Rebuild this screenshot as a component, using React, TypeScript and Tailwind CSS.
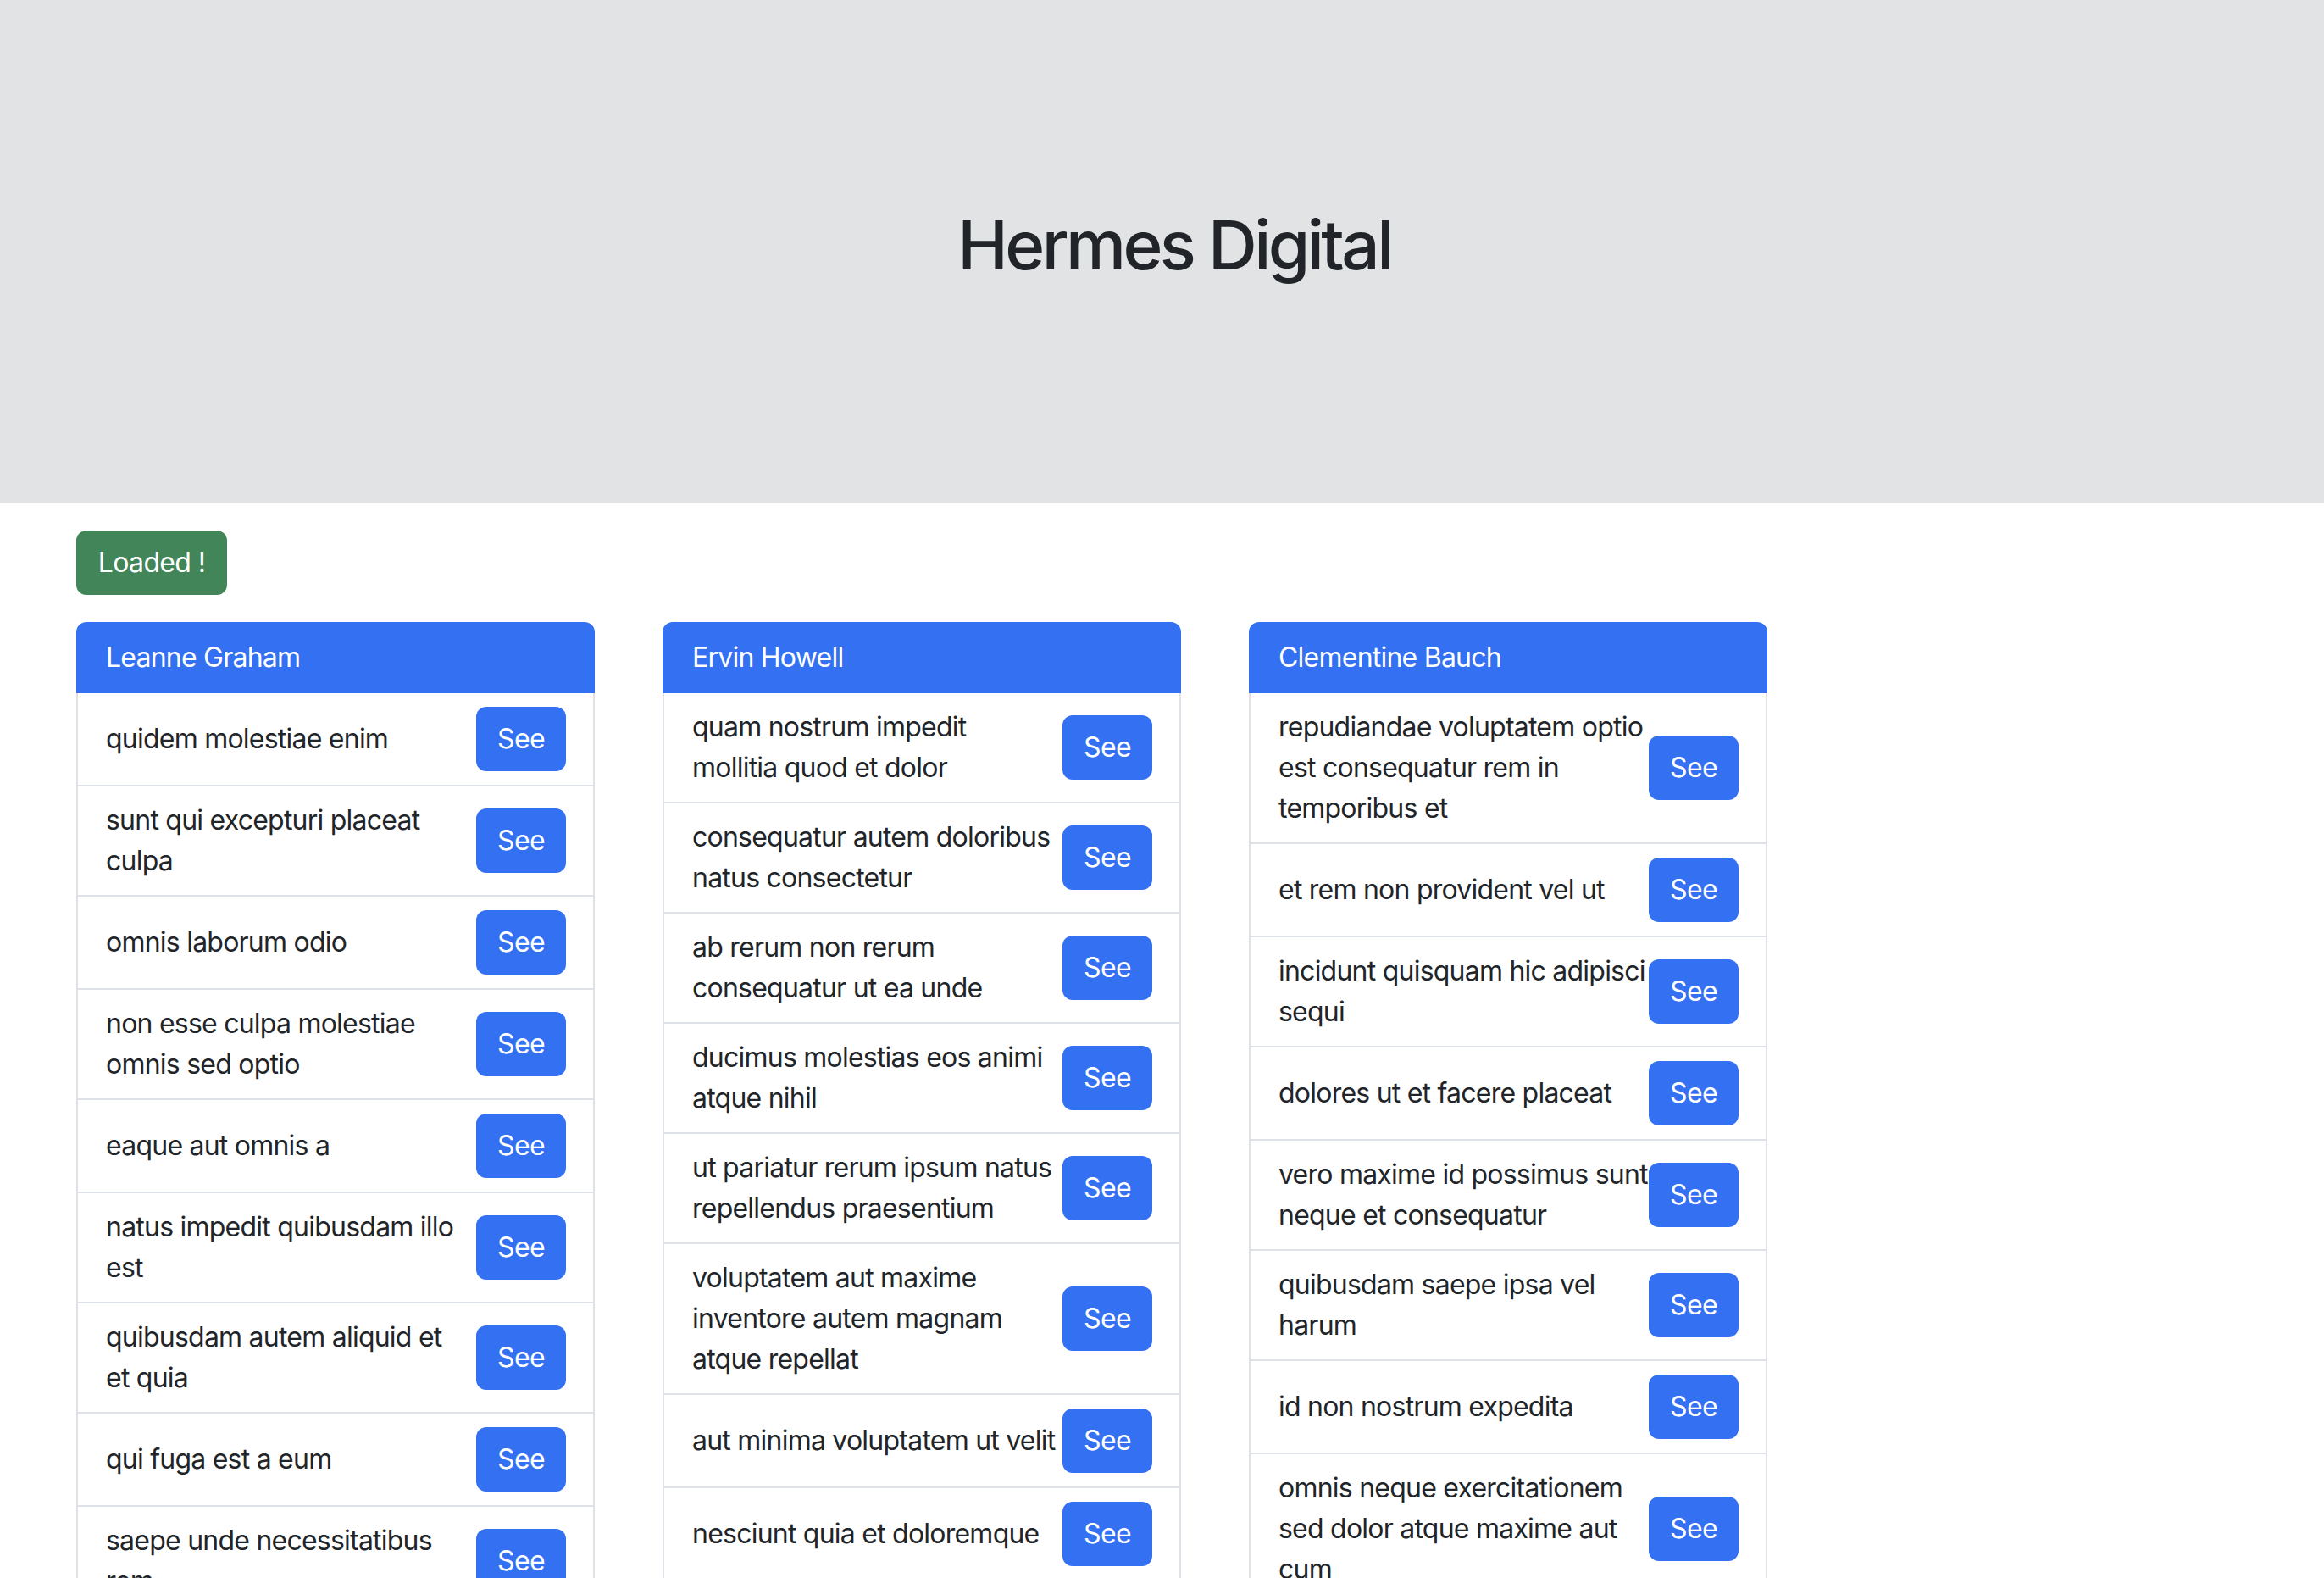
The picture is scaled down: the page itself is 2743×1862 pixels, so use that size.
import React from "react";

type Card = { name: string; items: string[][] };

const cards: Card[] = [
  {
    name: "Leanne Graham",
    items: [
      ["quidem molestiae enim"],
      ["sunt qui excepturi placeat", "culpa"],
      ["omnis laborum odio"],
      ["non esse culpa molestiae", "omnis sed optio"],
      ["eaque aut omnis a"],
      ["natus impedit quibusdam illo", "est"],
      ["quibusdam autem aliquid et", "et quia"],
      ["qui fuga est a eum"],
      ["saepe unde necessitatibus", "rem"],
      ["distinctio laborum qui"],
    ],
  },
  {
    name: "Ervin Howell",
    items: [
      ["quam nostrum impedit", "mollitia quod et dolor"],
      ["consequatur autem doloribus", "natus consectetur"],
      ["ab rerum non rerum", "consequatur ut ea unde"],
      ["ducimus molestias eos animi", "atque nihil"],
      ["ut pariatur rerum ipsum natus", "repellendus praesentium"],
      ["voluptatem aut maxime", "inventore autem magnam", "atque repellat"],
      ["aut minima voluptatem ut velit"],
      ["nesciunt quia et doloremque"],
      ["velit pariatur quaerat similique", "libero omnis quia"],
      ["voluptas rerum iure ut enim"],
    ],
  },
  {
    name: "Clementine Bauch",
    items: [
      ["repudiandae voluptatem optio", "est consequatur rem in", "temporibus et"],
      ["et rem non provident vel ut"],
      ["incidunt quisquam hic adipisci", "sequi"],
      ["dolores ut et facere placeat"],
      ["vero maxime id possimus sunt", "neque et consequatur"],
      ["quibusdam saepe ipsa vel", "harum"],
      ["id non nostrum expedita"],
      ["omnis neque exercitationem", "sed dolor atque maxime aut", "cum"],
      ["inventore ut quasi magnam", "itaque est fugit"],
      ["tempora assumenda et similique", "odit distinctio error"],
    ],
  },
];

function AlbumCard({ card }: { card: Card }) {
  return (
    <div className="w-[612px] shrink-0">
      <div className="h-[84px] px-[35px] flex items-center bg-[#3370f2] text-white text-[32px] leading-[48px] tracking-[-0.024em] rounded-t-[12px]">
        {card.name}
      </div>
      {card.items.map((lines, i) => (
        <div
          key={i}
          className="flex items-center justify-between border-x-2 border-b-2 border-[#dee2e6] pl-[33px] pr-[32px] py-[16px]"
        >
          <div className="min-w-0 flex-1 text-[32px] leading-[48px] tracking-[-0.024em] text-[#212529]">
            {lines.map((l, j) => (
              <span key={j} className="block whitespace-nowrap">
                {l}
              </span>
            ))}
          </div>
          <button className="shrink-0 w-[106px] h-[76px] rounded-[12px] bg-[#3370f2] text-white text-[32px] leading-[48px] tracking-[-0.02em] flex items-center justify-center">
            See
          </button>
        </div>
      ))}
    </div>
  );
}

export default function App() {
  return (
    <div className="min-h-screen bg-white text-[#212529] font-['Inter','Liberation_Sans',sans-serif]">
      <header className="h-[594px] bg-[#e2e3e5] flex items-center justify-center">
        <h1 className="ml-[29px] mb-[16px] text-[80px] leading-[96px] font-medium tracking-[-0.045em] text-[#212529]">
          Hermes Digital
        </h1>
      </header>
      <main className="pl-[90px] pt-[32px]">
        <div className="w-[178px] h-[76px] rounded-[12px] bg-[#428558] text-white text-[32px] leading-[48px] tracking-[-0.02em] flex items-center justify-center">
          Loaded !
        </div>
        <div className="mt-[32px] flex items-start gap-[80px]">
          {cards.map((c) => (
            <AlbumCard key={c.name} card={c} />
          ))}
        </div>
      </main>
    </div>
  );
}
